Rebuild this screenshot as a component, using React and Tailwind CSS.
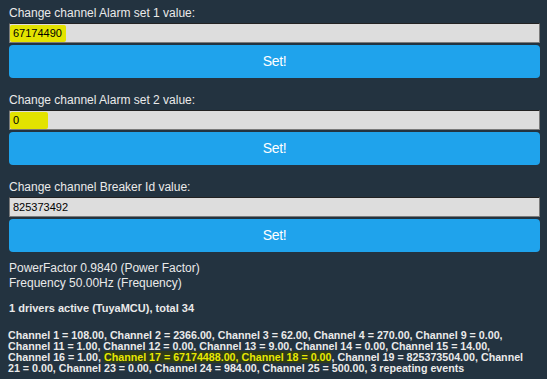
import React from "react";

const Field = ({ label, value, marked, first }) => (
  <div className={first ? "" : "mt-[14px]"}>
    <div className="text-[12px] leading-[16px] text-[#eaeaea]">{label}</div>
    <div className="mt-[2px] h-[20px] bg-[#dddddd] border border-[#7a7a7a] border-t-[#222] flex items-center text-[11px] text-black">
      {marked ? (
        <span className="h-[17px] flex items-center pl-[3px] pr-[8px] bg-[#e3e300] rounded-[2px]" style={{ width: marked }}>
          {value}
        </span>
      ) : (
        <span className="pl-[3px]">{value}</span>
      )}
    </div>
    <button className="mt-[2px] w-full h-[33px] rounded-[4px] bg-[#1fa3ec] text-white text-[14px] tracking-[-0.4px]">
      Set!
    </button>
  </div>
);

export default function App() {
  return (
    <div className="w-[547px] h-[379px] overflow-hidden bg-[#233340] pl-[9px] pr-[7px] pt-[5px] font-['Liberation_Sans',Arial,sans-serif] text-[#eaeaea]">
      <Field first label="Change channel Alarm set 1 value:" value="67174490" marked="56px" />
      <Field label="Change channel Alarm set 2 value:" value="0" marked="38px" />
      <Field label="Change channel Breaker Id value:" value="825373492" />

      <div className="mt-[9px] text-[12px] leading-[15px]">
        <div>PowerFactor 0.9840 (Power Factor)</div>
        <div>Frequency 50.00Hz (Frequency)</div>
      </div>

      <div className="mt-[11px] text-[11px] leading-[13px] font-bold">1 drivers active (TuyaMCU), total 34</div>

      {/* channel dump, broken where the page wraps it */}
      <div className="mt-[15px] -ml-[1px] text-[10.7px] leading-[11px] font-bold whitespace-nowrap">
        <div>Channel 1 = 108.00, Channel 2 = 2366.00, Channel 3 = 62.00, Channel 4 = 270.00, Channel 9 = 0.00,</div>
        <div>Channel 11 = 1.00, Channel 12 = 0.00, Channel 13 = 9.00, Channel 14 = 0.00, Channel 15 = 14.00,</div>
        <div>
          Channel 16 = 1.00, <span className="bg-[#2f3b1b] text-[#e8e800]">Channel 17 = 67174488.00, Channel 18 = 0.00</span>,
          Channel 19 = 825373504.00, Channel
        </div>
        <div>21 = 0.00, Channel 23 = 0.00, Channel 24 = 984.00, Channel 25 = 500.00, 3 repeating events</div>
      </div>
    </div>
  );
}
